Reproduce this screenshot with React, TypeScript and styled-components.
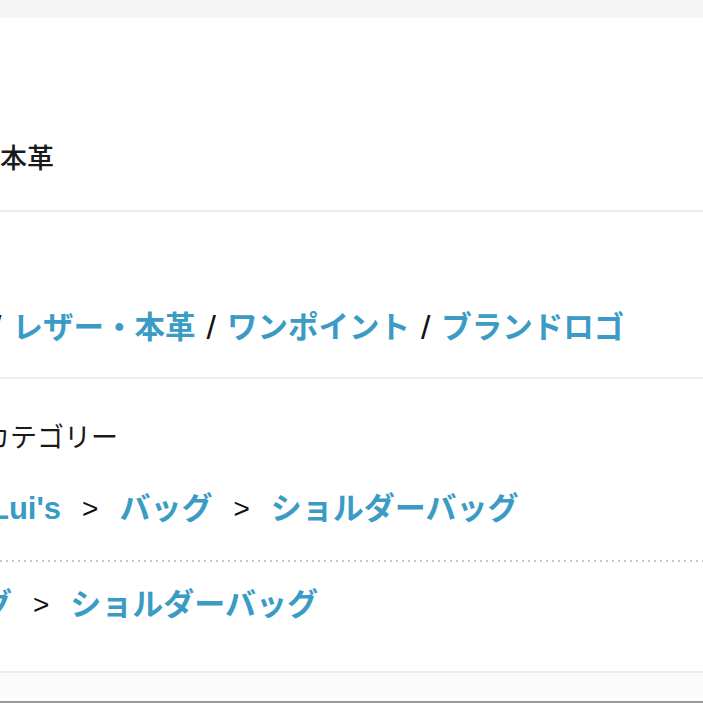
import React from "react";
import styled, { createGlobalStyle } from "styled-components";

const GlobalStyle = createGlobalStyle`
  html, body {
    margin: 0;
    padding: 0;
    background: #ffffff;
    overflow: hidden;
  }
  body {
    font-family: "Liberation Sans", "Noto Sans CJK JP", sans-serif;
    -webkit-font-smoothing: antialiased;
  }
`;

const Page = styled.div`
  width: 703px;
  height: 703px;
  display: flex;
  flex-direction: column;
  overflow: hidden;
  background: #ffffff;
`;

const TopBand = styled.div`
  height: 18px;
  flex: none;
  background: #f5f5f5;
`;

const Section = styled.section<{ $pt: number; $pb: number }>`
  flex: none;
  padding: ${(p) => p.$pt}px 0 ${(p) => p.$pb}px;
  border-bottom: 2px solid #ededed;
  display: flex;
  flex-direction: column;
  overflow: hidden;
`;

const PlainText = styled.div<{ $offset?: number; $weight?: number }>`
  font-size: 27px;
  line-height: 40px;
  font-weight: ${(p) => p.$weight ?? 400};
  color: #1a1a1a;
  white-space: nowrap;
  margin-left: ${(p) => p.$offset ?? 0}px;
`;

const LinkRow = styled.div<{ $offset: number; $gap: number; $mt?: number }>`
  display: flex;
  align-items: center;
  gap: ${(p) => p.$gap}px;
  height: 44px;
  white-space: nowrap;
  margin-left: ${(p) => p.$offset}px;
  margin-top: ${(p) => p.$mt ?? 0}px;
`;

const LinkText = styled.a<{ $size: number }>`
  font-size: ${(p) => p.$size}px;
  line-height: 44px;
  font-weight: 700;
  color: #3a9bc5;
  text-decoration: none;
  flex: none;
`;

const Sep = styled.span<{ $size: number }>`
  font-size: ${(p) => p.$size}px;
  line-height: 44px;
  color: #111111;
  flex: none;
`;

const DottedRule = styled.div`
  height: 2px;
  margin-top: 29px;
  background-image: repeating-linear-gradient(
    to right,
    #c6c6c6 0 2px,
    transparent 2px 6px
  );
`;

const FooterStrip = styled.div`
  height: 28px;
  flex: none;
  background: #fbfbfb;
  border-bottom: 2px solid #9a9a9a;
`;

const tags = ["レザー・本革", "ワンポイント", "ブランドロゴ"];

export default function App() {
  return (
    <>
      <GlobalStyle />
      <Page>
        <TopBand />
        <Section $pt={121} $pb={31}>
          <PlainText $weight={500}>本革</PlainText>
        </Section>
        <Section $pt={93} $pb={28}>
          <LinkRow $offset={-8} $gap={11}>
            {tags.map((t) => (
              <React.Fragment key={t}>
                <Sep $size={34}>/</Sep>
                <LinkText href="#" $size={30.5}>
                  {t}
                </LinkText>
              </React.Fragment>
            ))}
          </LinkRow>
        </Section>
        <Section $pt={39} $pb={44}>
          <PlainText $offset={-17}>カテゴリー</PlainText>
          <LinkRow $offset={-10} $gap={21} $mt={29}>
            <LinkText href="#" $size={31}>
              Lui's
            </LinkText>
            <Sep $size={28}>&gt;</Sep>
            <LinkText href="#" $size={31}>
              バッグ
            </LinkText>
            <Sep $size={28}>&gt;</Sep>
            <LinkText href="#" $size={31}>
              ショルダーバッグ
            </LinkText>
          </LinkRow>
          <DottedRule />
          <LinkRow $offset={-81} $gap={21} $mt={21}>
            <LinkText href="#" $size={31}>
              バッグ
            </LinkText>
            <Sep $size={28}>&gt;</Sep>
            <LinkText href="#" $size={31}>
              ショルダーバッグ
            </LinkText>
          </LinkRow>
        </Section>
        <FooterStrip />
      </Page>
    </>
  );
}
